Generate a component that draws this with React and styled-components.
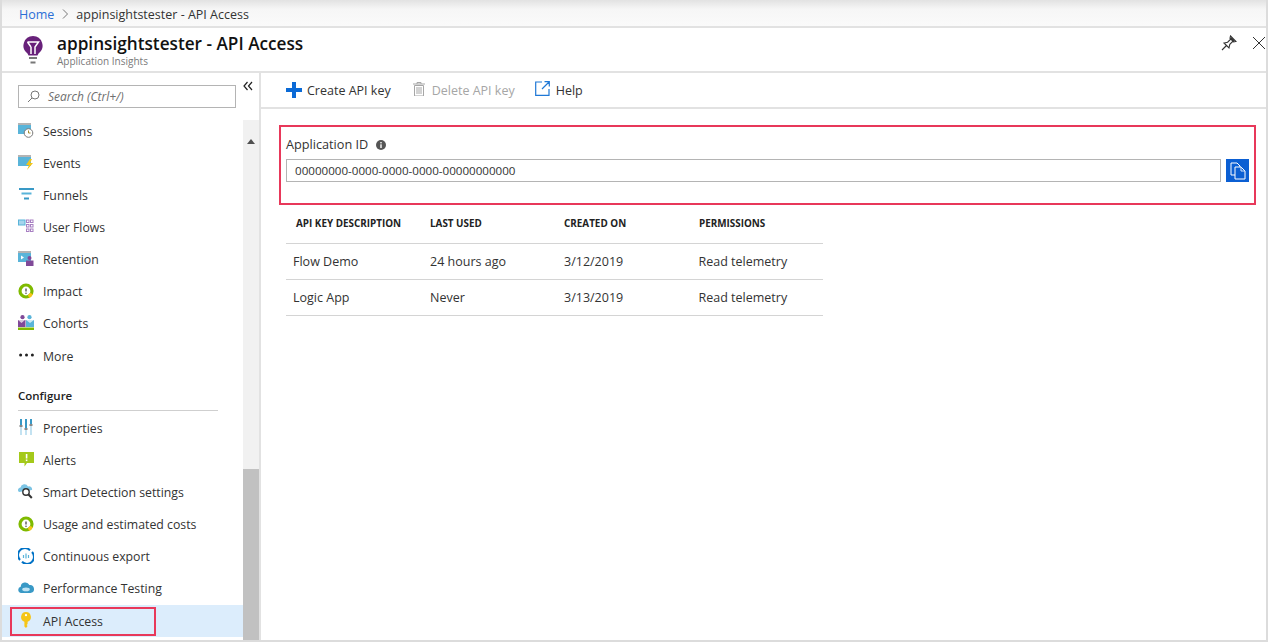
import React from "react";
import styled, { createGlobalStyle } from "styled-components";

const GlobalStyle = createGlobalStyle`
  html, body {
    margin: 0;
    padding: 0;
    height: 100%;
    background: #fff;
    font-family: "Open Sans", "Noto Sans", "Liberation Sans", sans-serif;
    color: #333;
    overflow: hidden;
  }
  * { box-sizing: border-box; }
`;

const Page = styled.div`
  width: 1268px;
  height: 642px;
  display: flex;
  flex-direction: column;
  border-left: 2px solid #dcdcdc;
  border-right: 2px solid #dcdcdc;
  border-bottom: 2px solid #dcdcdc;
  overflow: hidden;
`;

const Breadcrumb = styled.div`
  height: 28px;
  flex: none;
  display: flex;
  align-items: center;
  padding: 2px 0 0 17px;
  background: linear-gradient(#e2e2e2, #f6f6f6 35%, #fafafa);
  border-bottom: 2px solid #e2e2e2;
  font-size: 12.5px;
`;

const Crumb = styled.a`
  color: #2b6fd6;
`;

const Chevron = styled.svg`
  width: 8px;
  height: 10px;
  margin: 0 7px 0 7px;
`;

const BladeHeader = styled.div`
  height: 45px;
  flex: none;
  display: flex;
  align-items: flex-start;
  padding: 4px 0 0 21px;
  border-bottom: 2px solid #e2e2e2;
`;

const BladeLogo = styled.svg`
  width: 20px;
  height: 29px;
  flex: none;
  margin-top: 4px;
`;

const TitleBlock = styled.div`
  margin-left: 14px;
  flex: 1;
`;

const Title = styled.h1`
  margin: 0;
  font-size: 17.2px;
  line-height: 23px;
  font-weight: 600;
  color: #111;
`;

const Subtitle = styled.div`
  font-size: 10px;
  line-height: 12px;
  color: #7a7a7a;
`;

const HeaderActions = styled.div`
  display: flex;
  gap: 15px;
  padding-top: 3px;
`;

const CloseIcon = styled.svg`
  margin-top: 1px;
`;

const Body = styled.div`
  flex: 1;
  display: flex;
  min-height: 0;
`;

const Sidebar = styled.aside`
  width: 259px;
  flex: none;
  display: flex;
  flex-direction: column;
  border-right: 2px solid #e2e2e2;
`;

const SearchRow = styled.div`
  height: 42px;
  flex: none;
  display: flex;
  align-items: flex-start;
  padding: 12px 0 0 16px;
`;

const SearchBox = styled.div`
  width: 218px;
  height: 23px;
  display: flex;
  align-items: center;
  gap: 8px;
  padding-left: 8px;
  border: 1px solid #b4b4b4;
  font-size: 12px;
  font-style: italic;
  color: #6f6f6f;
`;

const Collapse = styled.svg`
  width: 10px;
  height: 10px;
  margin: -4px 0 0 7px;
`;

const NavArea = styled.div`
  flex: 1;
  display: flex;
  min-height: 0;
`;

const NavList = styled.nav`
  flex: 1;
  min-width: 0;
`;

const NavItem = styled.div`
  position: relative;
  height: 32.15px;
  display: flex;
  align-items: center;
  gap: 9px;
  padding-left: 16px;
  font-size: 12.3px;
  color: #333;
  background: ${(p) => (p.$active ? "#dcedfc" : "transparent")};
`;

const IconSlot = styled.span`
  width: 16px;
  height: 16px;
  margin-top: -2px;
  flex: none;
  display: flex;
  align-items: center;
  justify-content: center;
`;

const Callout = styled.span`
  position: absolute;
  left: 8px;
  top: 2px;
  width: 146px;
  height: 29px;
  border: 2px solid #e8385a;
  pointer-events: none;
`;

const SectionTitle = styled.div`
  margin: 15px 25px 1px 16px;
  height: 24px;
  font-size: 11.5px;
  line-height: 18px;
  font-weight: 600;
  color: #222;
  border-bottom: 1px solid #cfcfcf;
`;

const Scrollbar = styled.div`
  width: 16px;
  flex: none;
  display: flex;
  flex-direction: column;
  background: #f1f1f1;
  margin-top: 5px;
`;

const ScrollArrow = styled.div`
  height: 349px;
  padding: 7px 0 0 4px;
`;

const ScrollThumb = styled.div`
  flex: 1;
  background: #c1c1c1;
`;

const Content = styled.main`
  flex: 1;
  min-width: 0;
  display: flex;
  flex-direction: column;
`;

const Toolbar = styled.div`
  height: 36px;
  flex: none;
  display: flex;
  align-items: center;
  padding-left: 25px;
  gap: 20px;
  border-bottom: 2px solid #e2e2e2;
`;

const ToolButton = styled.button`
  display: flex;
  align-items: center;
  gap: ${(p) => p.$gap || 6}px;
  margin-left: ${(p) => p.$offset || 0}px;
  padding: 0;
  border: 0;
  background: none;
  font: inherit;
  font-size: 12.5px;
  color: ${(p) => (p.disabled ? "#a6a6a6" : "#333")};
`;

const RaisedIcon = styled.svg`
  margin-top: -3px;
`;

const IdBox = styled.section`
  margin: 16px 10px 0 18px;
  height: 80px;
  flex: none;
  padding: 7px 5px 0 5px;
  border: 2px solid #e8385a;
`;

const IdLabel = styled.div`
  display: flex;
  align-items: center;
  gap: 8px;
  height: 20px;
  font-size: 12.7px;
  color: #333;
`;

const InfoIcon = styled.svg`
  margin-top: 2px;
`;

const IdRow = styled.div`
  display: flex;
  gap: 5px;
  margin-top: 5px;
`;

const IdInput = styled.div`
  flex: 1;
  height: 23px;
  display: flex;
  align-items: center;
  padding-left: 8px;
  border: 1px solid #b4b4b4;
  font-size: 11.6px;
  color: #333;
`;

const CopyButton = styled.button`
  width: 23px;
  height: 23px;
  padding: 0;
  border: 0;
  display: flex;
  align-items: center;
  justify-content: center;
  background: #0b5fd3;
`;

const KeyTable = styled.div`
  width: 537px;
  margin-left: 25px;
`;

const HeadRow = styled.div`
  display: grid;
  grid-template-columns: 134px 134px 135px 1fr;
  height: 39px;
  align-items: center;
  padding: 0 0 3px 10px;
  border-bottom: 1px solid #d4d4d4;
  font-size: 9.9px;
  font-weight: 700;
  color: #222;
`;

const KeyRow = styled.div`
  display: grid;
  grid-template-columns: 137px 134px 134.5px 1fr;
  height: 36px;
  align-items: center;
  padding-left: 7px;
  border-bottom: 1px solid #d4d4d4;
  font-size: 12.5px;
  color: #333;
`;

// small drawings for the blade menu
const SessionsIcon = () => (
  <svg width="16" height="15" viewBox="0 0 16 15">
    <rect x="0" y="0" width="13" height="11" fill="#59b4d9" />
    <rect x="0" y="0" width="13" height="2" fill="#b4b4b4" />
    <circle cx="10.500" cy="10" r="4.300" fill="#fff" stroke="#7a7a7a" />
    <path d="M10.500 7.500V10h2" fill="none" stroke="#a08a2c" />
  </svg>
);

const EventsIcon = () => (
  <svg width="16" height="15" viewBox="0 0 16 15">
    <rect x="0" y="0" width="13" height="11" fill="#59b4d9" />
    <rect x="0" y="0" width="13" height="2" fill="#b4b4b4" />
    <path d="M12 4 8 10h3l-2 5 6-7h-3l2-4z" fill="#f5c518" />
  </svg>
);

const FunnelsIcon = () => (
  <svg width="15" height="12" viewBox="0 0 15 12">
    <rect x="0" y="0" width="15" height="2" fill="#3999c6" />
    <rect x="2.500" y="4.500" width="10" height="2" fill="#59b4d9" />
    <rect x="5" y="9.500" width="5" height="2" fill="#3999c6" />
  </svg>
);

const FlowsIcon = () => (
  <svg width="16" height="14" viewBox="0 0 16 14">
    <rect x=".5" y="1" width="6.500" height="5" fill="#a5d4ec" stroke="#59b4d9" />
    <g fill="none" stroke="#a77fc2">
      <rect x="8.500" y="1" width="2.500" height="2.500" />
      <rect x="12.500" y="1" width="2.500" height="2.500" />
      <rect x="8.500" y="5.500" width="2.500" height="2.500" />
      <rect x="12.500" y="5.500" width="2.500" height="2.500" />
      <rect x="8.500" y="10" width="2.500" height="2.500" />
      <rect x="12.500" y="10" width="2.500" height="2.500" />
    </g>
  </svg>
);

const RetentionIcon = () => (
  <svg width="16" height="15" viewBox="0 0 16 15">
    <rect x="0" y="0" width="13" height="11" fill="#59b4d9" />
    <rect x="0" y="0" width="13" height="2" fill="#b4b4b4" />
    <path d="M3 4.500v4l3-2z" fill="#fff" />
    <circle cx="11.500" cy="7" r="2" fill="#804998" />
    <rect x="8" y="9.500" width="7.500" height="5.500" fill="#804998" />
  </svg>
);

const GaugeIcon = () => (
  <svg width="16" height="16" viewBox="0 0 16 16">
    <circle cx="8" cy="8" r="6" fill="#fff" stroke="#7fba00" strokeWidth="3.200" />
    <path d="M13.500 10.500a6 6 0 0 1-3 3" fill="none" stroke="#f5c518" strokeWidth="3.200" />
    <path d="M8 5.500v3" stroke="#555" strokeWidth="1.400" />
    <circle cx="8" cy="10.300" r=".8" fill="#555" />
  </svg>
);

const CohortsIcon = () => (
  <svg width="16" height="15" viewBox="0 0 16 15">
    <circle cx="4.500" cy="2.200" r="2.100" fill="#804998" />
    <circle cx="11.500" cy="2.200" r="2.100" fill="#59b4d9" />
    <path d="M8 5h8v7H8z" fill="#59b4d9" />
    <path d="M0 5h7.500v7H0z" fill="#804998" />
    <path d="M0 5l3.500 3L7 5zM8 5l4 3 4-3z" fill="#fff" opacity=".7" />
    <rect x="0" y="12.500" width="16" height="2.500" fill="#7fba00" />
  </svg>
);

const MoreIcon = () => (
  <svg width="15" height="4" viewBox="0 0 15 4">
    <circle cx="1.600" cy="2" r="1.500" fill="#222" />
    <circle cx="7.500" cy="2" r="1.500" fill="#222" />
    <circle cx="13.400" cy="2" r="1.500" fill="#222" />
  </svg>
);

const PropertiesIcon = () => (
  <svg width="14" height="16" viewBox="0 0 14 16">
    <rect x="1" y="0" width="2" height="16" fill="#c3e2f1" />
    <rect x="6" y="0" width="2" height="16" fill="#c3e2f1" />
    <rect x="11" y="0" width="2" height="16" fill="#c3e2f1" />
    <rect x="1" y="0" width="2" height="6" fill="#3999c6" />
    <rect x="6" y="0" width="2" height="9" fill="#3999c6" />
    <rect x="11" y="0" width="2" height="5" fill="#3999c6" />
    <rect x="0.500" y="6" width="3" height="2" fill="#8a8a8a" />
    <rect x="5.500" y="9" width="3" height="2" fill="#8a8a8a" />
    <rect x="10.500" y="5" width="3" height="2" fill="#8a8a8a" />
  </svg>
);

const AlertsIcon = () => (
  <svg width="15" height="15" viewBox="0 0 15 15">
    <path d="M0 0h15v11H8l-2.500 3.500V11H0z" fill="#a4c91a" />
    <rect x="6.800" y="2" width="1.600" height="4.500" fill="#fff" />
    <rect x="6.800" y="7.500" width="1.600" height="1.600" fill="#fff" />
  </svg>
);

const SmartIcon = () => (
  <svg width="16" height="15" viewBox="0 0 16 15">
    <path d="M1 8a2.500 2.500 0 0 1 1.500-4.500A4 4 0 0 1 10 2.500a3 3 0 0 1 4 3.500z" fill="#7cc4e4" />
    <circle cx="8" cy="8" r="3.200" fill="#fff" stroke="#333" strokeWidth="1.400" />
    <path d="m10.300 10.300 3.500 3.700" stroke="#333" strokeWidth="2" />
  </svg>
);

const ExportIcon = () => (
  <svg width="16" height="16" viewBox="0 0 16 16">
    <path d="M12 2.200A7 7 0 0 0 2 12M4 13.800A7 7 0 0 0 14 4" fill="none" stroke="#0072c6" strokeWidth="2" />
    <path d="M5.500 7v3M8 5.500V10.500M10.500 7v3" stroke="#59b4d9" strokeWidth="1.200" />
  </svg>
);

const CloudIcon = () => (
  <svg width="16" height="11" viewBox="0 0 16 11">
    <path d="M3.200 11a3.200 3.200 0 0 1-.5-6.300A4.600 4.600 0 0 1 11.400 3 3.500 3.500 0 0 1 12.500 11z" fill="#3999c6" />
    <ellipse cx="8" cy="7.400" rx="3.800" ry="1.800" fill="#bfe3f3" />
  </svg>
);

const KeyIcon = () => (
  <svg width="10" height="16" viewBox="0 0 10 16">
    <path d="M5 0a5 5 0 0 1 1.600 9.700V12L5.600 13l1 1L5 16l-1.600-1.600V9.700A5 5 0 0 1 5 0z" fill="#f5c518" />
    <circle cx="5" cy="3.200" r="1.100" fill="#fff" />
  </svg>
);

const menuTop = [
  ["Sessions", SessionsIcon],
  ["Events", EventsIcon],
  ["Funnels", FunnelsIcon],
  ["User Flows", FlowsIcon],
  ["Retention", RetentionIcon],
  ["Impact", GaugeIcon],
  ["Cohorts", CohortsIcon],
  ["More", MoreIcon],
];

const menuConfigure = [
  ["Properties", PropertiesIcon],
  ["Alerts", AlertsIcon],
  ["Smart Detection settings", SmartIcon],
  ["Usage and estimated costs", GaugeIcon],
  ["Continuous export", ExportIcon],
  ["Performance Testing", CloudIcon],
];

const apiKeys = [
  { name: "Flow Demo", used: "24 hours ago", created: "3/12/2019", perm: "Read telemetry" },
  { name: "Logic App", used: "Never", created: "3/13/2019", perm: "Read telemetry" },
];

const MenuRow = ({ label, icon: Icon }) => (
  <NavItem>
    <IconSlot>
      <Icon />
    </IconSlot>
    {label}
  </NavItem>
);

export default function App() {
  return (
    <Page>
      <GlobalStyle />
      <Breadcrumb>
        <Crumb>Home</Crumb>
        <Chevron viewBox="0 0 8 10">
          <path d="m2 .5 4.500 4.500L2 9.500" fill="none" stroke="#777" />
        </Chevron>
        appinsightstester - API Access
      </Breadcrumb>

      <BladeHeader>
        <BladeLogo viewBox="0 0 20 29">
          <path d="M10 0a9.600 9.600 0 0 1 5.500 17.400L14.500 19.500h-9L4.500 17.400A9.600 9.600 0 0 1 10 0z" fill="#68217a" />
          <path d="M4.500 6h11l-3.500 5v7M8 11 4.500 6M8 11v7" fill="none" stroke="#fff" strokeWidth="1.500" />
          <rect x="6" y="21" width="8" height="2" fill="#777" />
          <rect x="7.500" y="25.500" width="5" height="2" fill="#777" />
        </BladeLogo>
        <TitleBlock>
          <Title>appinsightstester - API Access</Title>
          <Subtitle>Application Insights</Subtitle>
        </TitleBlock>
        <HeaderActions>
          <svg width="16" height="16" viewBox="0 0 16 16">
            <path d="M1 15l4.500-4.500M3 8l5 5 .8-3.600L12.500 5.700 10.300 3.500 6.600 7.200zM9.500 1l5.500 5.500-2.300.5-3.700-3.700z" fill="none" stroke="#333" strokeWidth="1.100" />
          </svg>
          <CloseIcon width="14" height="14" viewBox="0 0 14 14">
            <path d="M1 1l12 12M13 1 1 13" stroke="#333" />
          </CloseIcon>
        </HeaderActions>
      </BladeHeader>

      <Body>
        <Sidebar>
          <SearchRow>
            <SearchBox>
              <svg width="13" height="13" viewBox="0 0 13 13">
                <circle cx="8" cy="5" r="4" fill="none" stroke="#777" />
                <path d="M5 8 1 12" stroke="#777" />
              </svg>
              Search (Ctrl+/)
            </SearchBox>
            <Collapse viewBox="0 0 10 10">
              <path d="M4.500 1 1 5l3.500 4M9 1 5.500 5 9 9" fill="none" stroke="#222" strokeWidth="1.200" />
            </Collapse>
          </SearchRow>
          <NavArea>
            <NavList>
              {menuTop.map(([label, icon]) => (
                <MenuRow key={label} label={label} icon={icon} />
              ))}
              <SectionTitle>Configure</SectionTitle>
              {menuConfigure.map(([label, icon]) => (
                <MenuRow key={label} label={label} icon={icon} />
              ))}
              <NavItem $active>
                <IconSlot>
                  <KeyIcon />
                </IconSlot>
                API Access
                <Callout />
              </NavItem>
            </NavList>
            <Scrollbar>
              <ScrollArrow>
                <svg width="8" height="5" viewBox="0 0 8 5">
                  <path d="M4 0l4 5H0z" fill="#505050" />
                </svg>
              </ScrollArrow>
              <ScrollThumb />
            </Scrollbar>
          </NavArea>
        </Sidebar>

        <Content>
          <Toolbar>
            <ToolButton $gap={5}>
              <svg width="16" height="16" viewBox="0 0 16 16">
                <path d="M6 0h4v6h6v4h-6v6H6v-6H0V6h6z" fill="#0b6ad6" />
              </svg>
              Create API key
            </ToolButton>
            <ToolButton disabled $gap={7} $offset={2}>
              <RaisedIcon width="12" height="14" viewBox="0 0 12 14">
                <path d="M0 2h12M4 2V.5h4V2M1.500 3.500h9V14h-9zM4 5v7M6 5v7M8 5v7" fill="none" stroke="#a6a6a6" />
              </RaisedIcon>
              Delete API key
            </ToolButton>
            <ToolButton>
              <RaisedIcon width="15" height="15" viewBox="0 0 15 15">
                <path d="M7 1H.700v13.300H14V8M7 8l7-7M9.500.700h4.800v4.800" fill="none" stroke="#1f78d6" strokeWidth="1.200" />
              </RaisedIcon>
              Help
            </ToolButton>
          </Toolbar>

          <IdBox>
            <IdLabel>
              Application ID
              <InfoIcon width="10" height="10" viewBox="0 0 10 10">
                <circle cx="5" cy="5" r="5" fill="#555" />
                <rect x="4.300" y="4.300" width="1.400" height="3.700" fill="#fff" />
                <rect x="4.300" y="2" width="1.400" height="1.400" fill="#fff" />
              </InfoIcon>
            </IdLabel>
            <IdRow>
              <IdInput>00000000-0000-0000-0000-00000000000</IdInput>
              <CopyButton>
                <svg width="16" height="18" viewBox="0 0 16 18">
                  <path d="M5 13H1V1h6l3 3v1" fill="none" stroke="#fff" />
                  <path d="M5 5h6l4 4v8H5z" fill="none" stroke="#fff" />
                  <path d="M11 5v4h4" fill="none" stroke="#cfe2fa" />
                </svg>
              </CopyButton>
            </IdRow>
          </IdBox>

          <KeyTable>
            <HeadRow>
              <span>API KEY DESCRIPTION</span>
              <span>LAST USED</span>
              <span>CREATED ON</span>
              <span>PERMISSIONS</span>
            </HeadRow>
            {apiKeys.map((k) => (
              <KeyRow key={k.name}>
                <span>{k.name}</span>
                <span>{k.used}</span>
                <span>{k.created}</span>
                <span>{k.perm}</span>
              </KeyRow>
            ))}
          </KeyTable>
        </Content>
      </Body>
    </Page>
  );
}
